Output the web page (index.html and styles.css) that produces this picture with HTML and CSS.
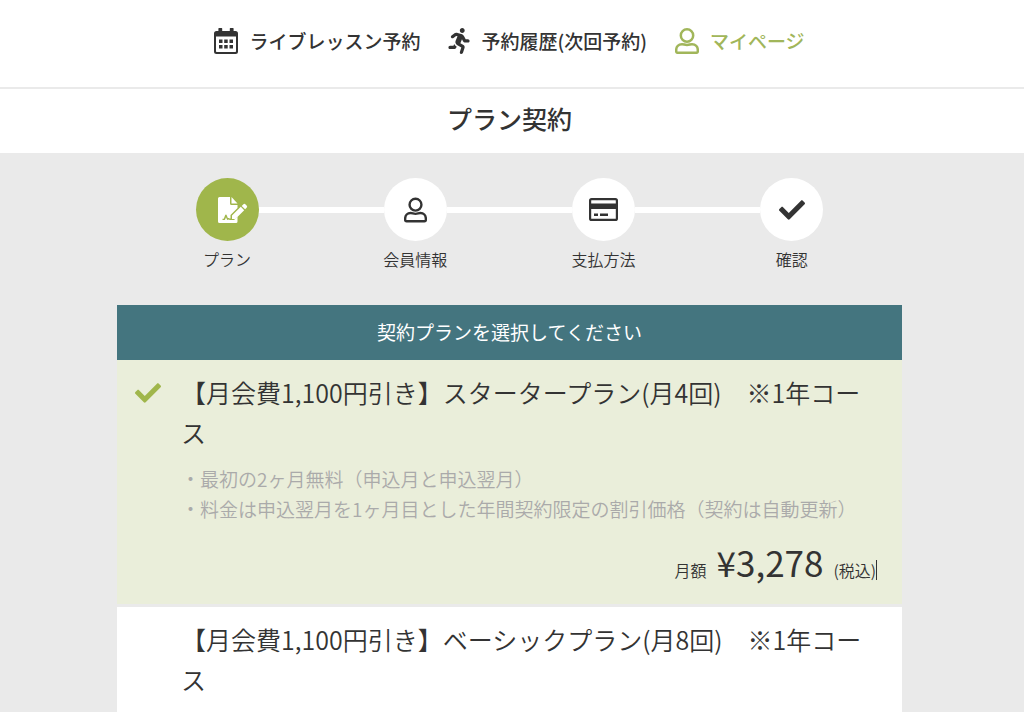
FILE: index.html
```html
<!DOCTYPE html>
<html lang="ja">
<head>
  <meta charset="UTF-8">
  <meta name="viewport" content="width=device-width, initial-scale=1.0">
  <title>プラン契約</title>
  <link rel="stylesheet" href="styles.css">
</head>
<body>
  <header>
    <nav class="nav">
      <a href="#lesson" class="nav-link">
        <svg class="icon-nav" viewBox="0 0 24 26" aria-hidden="true">
          <path fill="currentColor" fill-rule="evenodd" d="M5 0h2.600q.6 0 .6.6V3h7.600V.6q0-.6.6-.6H19q.6 0 .6.6V3H21.500Q24 3 24 5.500V23.500Q24 26 21.500 26H2.500Q0 26 0 23.500V5.500Q0 3 2.500 3H4.400V.6Q4.400 0 5 0zM2 8.500V23.300q0 .7.700.7H21.300q.7 0 .7-.7V8.500z"/>
          <path fill="currentColor" d="M5 11.500h3.500v3.500H5zM10.200 11.500h3.500v3.500h-3.500zM15.500 11.500H19v3.500h-3.500zM5 17h3.500v3.500H5zM10.200 17h3.500v3.500h-3.500zM15.500 17H19v3.500h-3.500z"/>
        </svg>
        <span>ライブレッスン予約</span>
      </a>
      <a href="#history" class="nav-link">
        <svg class="icon-nav icon-run" viewBox="0 0 416 512" aria-hidden="true">
          <path fill="currentColor" d="M272 96c26.510 0 48-21.490 48-48S298.510 0 272 0s-48 21.490-48 48 21.490 48 48 48zM113.690 317.470l-14.800 34.520H32c-17.670 0-32 14.330-32 32s14.330 32 32 32h77.450c19.250 0 36.580-11.440 44.110-29.090l8.790-20.520-10.670-6.300c-17.320-10.230-30.060-25.370-37.990-42.610zM384 223.990h-44.030l-26.060-53.250c-12.500-25.550-35.450-44.230-61.780-50.940l-71.080-21.140c-28.300-6.800-57.770-.55-80.840 17.140l-39.670 30.410c-14.030 10.750-16.690 30.830-5.920 44.860s30.840 16.660 44.860 5.920l39.690-30.410c7.670-5.890 17.440-8 25.270-6.140l14.700 4.370-37.460 87.390c-12.620 29.480-1.310 64.010 26.300 80.310l84.980 50.170-27.470 87.730c-5.280 16.860 4.110 34.820 20.970 40.090 3.190 1 6.410 1.480 9.580 1.480 13.610 0 26.230-8.770 30.520-22.450l31.640-101.060c5.910-20.770-2.890-43.080-21.640-54.390l-61.240-36.140 31.310-78.280 20.270 41.430c8 16.340 24.920 26.890 43.110 26.890H384c17.670 0 32-14.330 32-32s-14.330-31.990-32-31.990z"/>
        </svg>
        <span>予約履歴(次回予約)</span>
      </a>
      <a href="#mypage" class="nav-link active">
        <svg class="icon-nav" viewBox="0 0 24 26" aria-hidden="true">
          <g fill="none" stroke="currentColor" stroke-width="2.500" stroke-linejoin="round">
            <circle cx="12" cy="7.500" r="6.200"/>
            <path d="M7 16.200C3.500 16.200 1.200 18.500 1.200 22V23.400Q1.200 24.800 2.600 24.800H21.400Q22.800 24.800 22.800 23.400V22C22.800 18.500 20.500 16.200 17 16.200C15 16.200 14.500 17 12 17S9 16.200 7 16.200z"/>
          </g>
        </svg>
        <span>マイページ</span>
      </a>
    </nav>
    <h1 class="page-title">プラン契約</h1>
  </header>

  <main>
    <ol class="steps">
      <li class="step current">
        <div class="step-track">
          <span class="step-circle">
            <svg class="icon-contract" viewBox="0 0 30 26" aria-hidden="true">
              <path fill="currentColor" d="M1.500 0H12V6.500Q12 8 13.500 8H19.500V11L12.500 18V21.500C11.500 22 11 20.500 9.800 21L8.500 17.800Q7.800 17 7.200 18L5.800 21.800H4.500V23H6.500Q7.200 22.800 7.500 21.500L8 20.200L9 22.500Q9.500 23.200 10.500 22.600Q11.500 23.200 12.500 23H16L19.500 19.800V24.500Q19.500 26 18 26H1.500Q0 26 0 24.500V1.500Q0 0 1.500 0z"/>
              <path fill="currentColor" d="M13.500 0L19.500 6.500H13.500z"/>
              <path fill="currentColor" d="M14 18.500L22.800 9.800L26.200 13.200L17.400 21.900H14zM23.700 8.900L25.200 7.400Q26.400 6.200 27.600 7.400L28.600 8.400Q29.800 9.600 28.600 10.800L27.100 12.300z"/>
            </svg>
          </span>
        </div>
        <span class="step-label">プラン</span>
      </li>
      <li class="step">
        <div class="step-track">
          <span class="step-circle">
            <svg class="icon-user" viewBox="0 0 24 26" aria-hidden="true">
              <g fill="none" stroke="currentColor" stroke-width="2.500" stroke-linejoin="round">
                <circle cx="12" cy="7.500" r="6.200"/>
                <path d="M7 16.200C3.500 16.200 1.200 18.500 1.200 22V23.400Q1.200 24.800 2.600 24.800H21.400Q22.800 24.800 22.800 23.400V22C22.800 18.500 20.500 16.200 17 16.200C15 16.200 14.500 17 12 17S9 16.200 7 16.200z"/>
              </g>
            </svg>
          </span>
        </div>
        <span class="step-label">会員情報</span>
      </li>
      <li class="step">
        <div class="step-track">
          <span class="step-circle">
            <svg class="icon-card" viewBox="0 0 29 23" aria-hidden="true">
              <rect x="1.100" y="1.100" width="26.800" height="20.800" rx="1.500" fill="none" stroke="currentColor" stroke-width="2.200"/>
              <path fill="currentColor" d="M1 5.500H28V11H1zM5 15.500H9V18H5zM11 15.500H19V18H11z"/>
            </svg>
          </span>
        </div>
        <span class="step-label">支払方法</span>
      </li>
      <li class="step">
        <div class="step-track">
          <span class="step-circle">
            <svg class="icon-check" viewBox="0 65 512 382" aria-hidden="true">
              <path fill="currentColor" d="M173.898 439.404l-166.400-166.400c-9.997-9.997-9.997-26.206 0-36.204l36.203-36.204c9.997-9.998 26.207-9.998 36.204 0L192 312.690 432.095 72.596c9.997-9.997 26.207-9.997 36.204 0l36.203 36.204c9.997 9.997 9.997 26.206 0 36.204l-294.400 294.401c-9.998 9.997-26.207 9.997-36.204-.001z"/>
            </svg>
          </span>
        </div>
        <span class="step-label">確認</span>
      </li>
    </ol>

    <form class="plans">
      <h2 class="plans-head">契約プランを選択してください</h2>
      <label class="plan">
        <input type="radio" name="plan" class="plan-radio" checked>
        <svg class="icon-check" viewBox="0 65 512 382" aria-hidden="true">
          <path fill="currentColor" d="M173.898 439.404l-166.400-166.400c-9.997-9.997-9.997-26.206 0-36.204l36.203-36.204c9.997-9.998 26.207-9.998 36.204 0L192 312.690 432.095 72.596c9.997-9.997 26.207-9.997 36.204 0l36.203 36.204c9.997 9.997 9.997 26.206 0 36.204l-294.400 294.401c-9.998 9.997-26.207 9.997-36.204-.001z"/>
        </svg>
        <span class="plan-body">
          <span class="plan-name">【月会費1,100円引き】スタータープラン(月4回)　※1年コース</span>
          <span class="plan-note">・最初の2ヶ月無料（申込月と申込翌月）<br>・料金は申込翌月を1ヶ月目とした年間契約限定の割引価格（契約は自動更新）</span>
          <span class="plan-price">
            <span>月額</span>
            <span class="amount">¥3,278</span>
            <span class="tax">(税込)</span>
          </span>
        </span>
      </label>
      <label class="plan">
        <input type="radio" name="plan" class="plan-radio">
        <svg class="icon-check" viewBox="0 65 512 382" aria-hidden="true">
          <path fill="currentColor" d="M173.898 439.404l-166.400-166.400c-9.997-9.997-9.997-26.206 0-36.204l36.203-36.204c9.997-9.998 26.207-9.998 36.204 0L192 312.690 432.095 72.596c9.997-9.997 26.207-9.997 36.204 0l36.203 36.204c9.997 9.997 9.997 26.206 0 36.204l-294.400 294.401c-9.998 9.997-26.207 9.997-36.204-.001z"/>
        </svg>
        <span class="plan-body">
          <span class="plan-name">【月会費1,100円引き】ベーシックプラン(月8回)　※1年コース</span>
        </span>
      </label>
    </form>
  </main>
</body>
</html>
```
FILE: styles.css
```css
* {
  box-sizing: border-box;
}
body {
  margin: 0;
  background-color: #eaeaea;
  color: #333;
  font-family: "Noto Sans CJK JP", sans-serif;
  font-size: 16px;
  font-weight: 350;
}
svg {
  display: block;
  flex: none;
}
header {
  background-color: #fff;
}
.nav {
  display: flex;
  justify-content: center;
  gap: 28px;
  padding: 25px 5px 30px 0;
  border-bottom: 2px solid #eaeaea;
}
.nav-link {
  display: flex;
  align-items: center;
  gap: 11px;
  color: #333;
  font-size: 19px;
  font-weight: 500;
  line-height: 32px;
  text-decoration: none;
}
.nav-link.active {
  color: #a1b65a;
}
.icon-nav {
  width: 24px;
  height: 26px;
}
.icon-run {
  width: 22px;
}
.page-title {
  margin: 0;
  padding: 9px 5px 15px 0;
  font-size: 25px;
  font-weight: 500;
  line-height: 40px;
  text-align: center;
}
main {
  padding: 25px 5px 0 0;
}
.steps {
  display: flex;
  max-width: 785px;
  margin: 0 auto 32px;
  padding: 0 16px;
  list-style: none;
}
.step {
  flex: 1;
  text-align: center;
}
.step-track {
  display: flex;
  align-items: center;
}
/* connecting lines on both sides of the circle */
.step-track::before,
.step-track::after {
  content: "";
  flex: 1;
  height: 6px;
  background-color: #fff;
}
.step:first-child .step-track::before,
.step:last-child .step-track::after {
  background-color: transparent;
}
.step-circle {
  display: flex;
  align-items: center;
  justify-content: center;
  width: 63px;
  height: 63px;
  border-radius: 50%;
  background-color: #fff;
}
.current .step-circle {
  background-color: #a0b64b;
  color: #fff;
}
.step-label {
  display: block;
  padding: 6px 0 1px;
  line-height: 25px;
}
.icon-contract {
  width: 30px;
  height: 26px;
  margin-left: 12px;
}
.icon-user {
  width: 23px;
  height: 26px;
}
.icon-card {
  width: 29px;
  height: 23px;
}
.icon-check {
  width: 26px;
  height: 20px;
}
.plans {
  max-width: 785px;
  margin: 0 auto;
}
.plans-head {
  margin: 0;
  padding: 11px 12px 13px;
  background-color: #44757f;
  color: #fff;
  font-size: 19px;
  font-weight: 400;
  line-height: 31px;
  text-align: center;
}
.plan {
  display: flex;
  align-items: flex-start;
  gap: 20px;
  padding: 12px 25px 14px 18px;
  margin-bottom: 3px;
  background-color: #fff;
  cursor: pointer;
}
.plan:has(:checked) {
  background-color: #eaeeda;
}
.plan-radio {
  position: absolute;
  opacity: 0;
}
.plan .icon-check {
  margin-top: 11px;
  color: #a0b64b;
  visibility: hidden;
}
.plan-radio:checked + .icon-check {
  visibility: visible;
}
.plan-body {
  flex: 1;
}
.plan-name {
  display: block;
  font-size: 25px;
  line-height: 40px;
}
.plan-note {
  display: block;
  margin-top: 12px;
  color: #aaa;
  font-size: 19px;
  line-height: 30px;
}
.plan-price {
  display: flex;
  align-items: baseline;
  justify-content: flex-end;
  gap: 10px;
  margin-top: 10px;
  line-height: 20px;
}
.amount {
  font-size: 35px;
  font-weight: 400;
  line-height: 56px;
}
.tax {
  border-right: 1px solid #333;
}
```
